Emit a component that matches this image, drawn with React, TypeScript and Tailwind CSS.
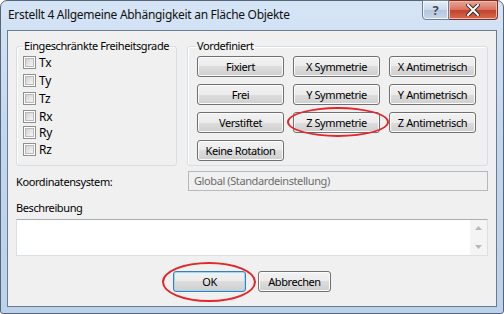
import React from "react";

const font = "font-['Segoe_UI','Noto_Sans',sans-serif]";

const freeDegrees = [
  { label: "Tx", mt: "mt-0" },
  { label: "Ty", mt: "mt-[5px]" },
  { label: "Tz", mt: "mt-[5px]" },
  { label: "Rx", mt: "mt-[5px]" },
  { label: "Ry", mt: "mt-[3px]" },
  { label: "Rz", mt: "mt-[4px]" },
];

const presets = [
  "Fixiert",
  "X Symmetrie",
  "X Antimetrisch",
  "Frei",
  "Y Symmetrie",
  "Y Antimetrisch",
  "Verstiftet",
  "Z Symmetrie",
  "Z Antimetrisch",
  "Keine Rotation",
];

function WinButton({
  label,
  isDefault,
  className = "",
}: {
  label: string;
  isDefault?: boolean;
  className?: string;
}) {
  return (
    <button
      className={`h-[21px] rounded-[3px] border text-[11px] leading-none text-black bg-[linear-gradient(#f2f2f2,#ebebeb_50%,#dddddd_50%,#cfcfcf)] ${
        isDefault
          ? "border-[#3c7fb1] shadow-[inset_0_0_0_1px_#9ad9f5]"
          : "border-[#707070] shadow-[inset_0_0_0_1px_#fbfbfb]"
      } ${className}`}
    >
      {label}
    </button>
  );
}

function Highlight({ className }: { className: string }) {
  return (
    <span
      className={`pointer-events-none absolute rounded-[50%] border-2 border-[#e3262a] ${className}`}
    />
  );
}

function Checkbox({ label, mt }: { label: string; mt: string }) {
  return (
    <label className={`flex h-[13px] items-center gap-[3px] ${mt}`}>
      <span className="flex h-[13px] w-[13px] border border-[#8e8f8f] bg-white p-[1px]">
        <span className="flex-1 border border-[#b9b9b9] bg-[linear-gradient(135deg,#d2d2d2,#f6f6f6)]" />
      </span>
      <span className="text-[12px] leading-none tracking-[-0.2px]">{label}</span>
    </label>
  );
}

export default function App() {
  return (
    <div
      className={`${font} flex h-[314px] w-[504px] flex-col rounded-t-[7px] rounded-b-[3px] border border-[#56667a] bg-[linear-gradient(#d6e5f6,#c3d7ee_40%,#bcd1ea)] text-black`}
    >
      <div className="flex h-[29px] shrink-0 items-start justify-between">
        <span className="ml-[7px] mt-[6px] whitespace-nowrap text-[12px] leading-[16px] tracking-[-0.3px] text-[#111]">
          Erstellt 4 Allgemeine Abhängigkeit an Fläche Objekte
        </span>
        <div className="-mt-px mr-[5px] flex h-[20px]">
          <div className="flex w-[27px] items-center justify-center rounded-bl-[4px] border border-[#6f7f93] bg-[linear-gradient(#e6eef8,#c9d8ea_50%,#b3c6de_50%,#c6d6ea)] shadow-[inset_0_0_0_1px_#f2f6fb]">
            <span className="text-[13px] font-bold leading-none text-[#3c4858] [text-shadow:0_0_1px_#fff]">
              ?
            </span>
          </div>
          <div className="flex w-[49px] items-center justify-center rounded-br-[4px] border border-l-0 border-[#7a3024] bg-[linear-gradient(#e9a596,#d9715d_50%,#c4412a_50%,#d16b4f)] shadow-[inset_0_0_0_1px_#f0b8aa]">
            <svg width="14" height="12" viewBox="0 0 14 12">
              <path d="M2 1 L12 11 M12 1 L2 11" stroke="#3b2a28" strokeWidth="4" strokeLinecap="square" />
              <path d="M2 1 L12 11 M12 1 L2 11" stroke="#ffffff" strokeWidth="2" strokeLinecap="square" />
            </svg>
          </div>
        </div>
      </div>

      <div className="mx-[6px] mb-[6px] flex flex-1 flex-col border border-[#6b7b90] bg-[#f0f0f0] px-[8px] pt-[7px] text-[11px] tracking-[-0.4px]">
        <div className="flex gap-[10px]">
          <fieldset className="w-[161px] min-w-0 shrink-0 rounded-[3px] border border-[#d5dfe5] pb-[9px] pt-[2px] shadow-[inset_1px_1px_0_#fff]">
            <legend className="ml-[6px] whitespace-nowrap px-[1px] leading-[16px]">
              Eingeschränkte Freiheitsgrade
            </legend>
            <div className="flex flex-col px-[6px]">
              {freeDegrees.map((d) => (
                <Checkbox key={d.label} label={d.label} mt={d.mt} />
              ))}
            </div>
          </fieldset>

          <fieldset className="min-w-0 flex-1 rounded-[3px] border border-[#d5dfe5] pb-[4px] pt-[2px] shadow-[inset_1px_1px_0_#fff]">
            <legend className="ml-[8px] whitespace-nowrap px-[1px] leading-[16px]">
              Vordefiniert
            </legend>
            <div className="grid grid-cols-[87px_87px_87px] gap-x-[9px] gap-y-[7px] pl-[9px]">
              {presets.map((p) => (
                <div key={p} className="relative flex">
                  <WinButton label={p} className="flex-1" />
                  {p === "Z Symmetrie" && (
                    <Highlight className="-left-[6px] -right-[9px] -top-[5px] -bottom-[4px]" />
                  )}
                </div>
              ))}
            </div>
          </fieldset>
        </div>

        <div className="mt-[5px] flex h-[20px] items-center">
          <span className="w-[172px] leading-none">Koordinatensystem:</span>
          <div className="flex h-[20px] flex-1 items-center border border-[#b5b9bd] bg-[#f0f0f0] px-[5px] text-[#6d6d6d]">
            Global (Standardeinstellung)
          </div>
        </div>

        <span className="mt-[9px] leading-[16px]">Beschreibung</span>
        <div className="mt-[3px] flex h-[37px] border border-[#dbdfe6] border-t-[#abadb3] bg-white">
          <div className="flex-1" />
          <div className="flex w-[17px] flex-col items-center justify-between bg-[#f4f4f4] py-[6px]">
            <svg width="7" height="4" viewBox="0 0 7 4">
              <path d="M0 4 L3.5 0 L7 4 Z" fill="#b8b8b8" />
            </svg>
            <svg width="7" height="4" viewBox="0 0 7 4">
              <path d="M0 0 L7 0 L3.5 4 Z" fill="#b8b8b8" />
            </svg>
          </div>
        </div>

        <div className="mt-[15px] flex justify-center gap-[12px]">
          <div className="relative flex">
            <WinButton label="OK" isDefault className="w-[73px]" />
            <Highlight className="-left-[11px] -right-[10px] -top-[9px] -bottom-[10px]" />
          </div>
          <WinButton label="Abbrechen" className="w-[73px]" />
        </div>
      </div>
    </div>
  );
}
